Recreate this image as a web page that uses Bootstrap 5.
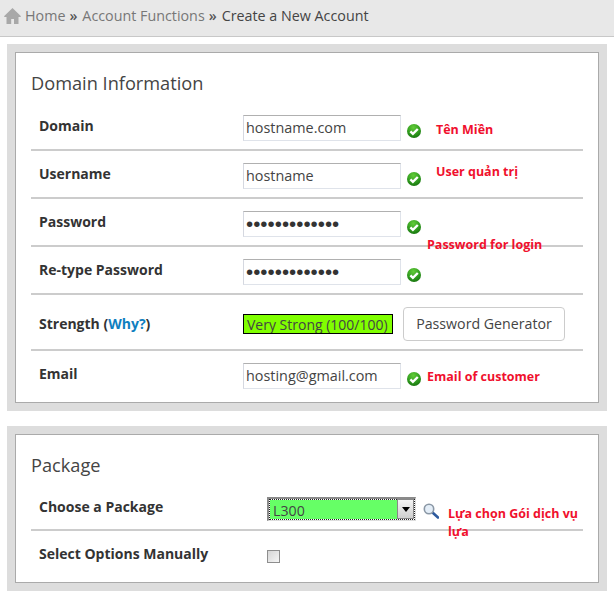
<!DOCTYPE html>
<html lang="vi">
<head>
<meta charset="utf-8">
<title>Create a New Account</title>
<link rel="stylesheet" href="https://cdn.jsdelivr.net/npm/bootstrap@5.3.0/dist/css/bootstrap.min.css">
<style>
body{background:#fff;font-family:"Open Sans",sans-serif;font-size:14px;color:#333;overflow:hidden}
.crumbbar{height:37px;background:#e8e8e8;border-bottom:1px solid #c8c8c8;padding:0 0 4px 4px;font-size:14.3px;color:#444}
.crumbbar a{color:#777;text-decoration:none}
.crumbhome{margin-right:4px;flex:none}
.crumbsep{margin:0 5px 0 4px;font-weight:600;color:#555}
.outerbox{margin:7px 7px 0 7px;border:8px solid #ddd;width:600px}
.outerbox + .outerbox{margin-top:15px}
.innerbox{border:1px solid #aaa;background:#fff;padding:0 15px}
.boxtitle{font-size:18.2px;font-weight:400;line-height:24px;color:#444;margin:0;padding:18px 0 20px}
.formrow{padding:12px 0 8px;border-bottom:2px solid #ccc;position:relative}
.formrow.firstrow{padding-top:0}
.formrow.lastrow{border-bottom:0;padding-bottom:13px}
.formrow.endrow{padding-bottom:17px}
.lbl{width:212px;padding-left:8px;font-weight:700;font-size:14px;color:#333;line-height:22px;flex:none}
.lbl.lblmid{padding-top:6px}
.lbl.lblup{margin-top:-1px}
.lbl a{color:#0f7fc0;text-decoration:none}
.txtin{width:158px;height:26px;border:1px solid #dfe3ea;border-top-color:#b0b0b0;border-left-color:#d5d8e0;padding:0 2px 2px;font-size:14.4px;font-family:"Open Sans",sans-serif;color:#444;background:#fff;outline:0}
.txtin[type=password]{font-family:"Liberation Sans",sans-serif;font-size:20.5px;padding:0 2px;color:#333}
.chk{margin:9px 0 0 6px;flex:none;display:block}
.note{color:#f0102d;font-weight:700;font-size:12.5px;line-height:18px;white-space:nowrap}
.noteover{position:absolute}
.noteemail{margin:5px 0 0 6px}
.notedomain{left:405px;top:6px}
.noteuser{left:405px;top:12px}
.notepass{left:396px;top:37px}
.notepkg{left:417px;top:8px;white-space:normal;width:142px}
.strengthbox{width:150px;height:20px;margin-top:7px;background:#80ff00;border:1px solid #000;font-size:14px;line-height:19px;color:#444;white-space:nowrap;overflow:hidden;padding-left:3px;flex:none}
.genbtn{margin-left:10px;width:162px;height:34px;padding:0;background:#fff;border:1px solid #ccc;border-radius:4px;font-size:14.2px;color:#444;font-family:"Open Sans",sans-serif}
.pkgwrap{margin-left:24px;width:149px;height:24px;border:2px solid #8a8a8a;border-right:1px solid #ddd;border-bottom:1px solid #ddd;position:relative;flex:none;background:#fff}
.pkgsel{appearance:none;-webkit-appearance:none;display:block;width:100%;height:100%;border:1px solid #fff;background:#66ff66;color:#444;font-size:14.2px;font-family:"Open Sans",sans-serif;padding:0 0 0 3px;outline:1px dotted #222;outline-offset:-1px;border-radius:0}
.pkgarrow{position:absolute;right:1px;top:0;width:17px;height:20px;border:1px solid #888;background:linear-gradient(#f4f4f4,#cfcfcf);display:flex;align-items:center;justify-content:center}
.mag{margin:6px 0 0 7px;display:block;flex:none}
.checkbtn{appearance:none;-webkit-appearance:none;display:block;width:13px;height:13px;margin:7px 0 0 24px;border:1px solid #8e8e8e;background:linear-gradient(135deg,#d6d6d6,#f6f6f6);border-radius:0}
</style>
</head>
<body>
<svg width="0" height="0" class="d-block position-absolute">
<defs>
<radialGradient id="gg" cx="45%" cy="25%" r="80%"><stop offset="0" stop-color="#62cc38"/><stop offset=".6" stop-color="#2f9a1e"/><stop offset="1" stop-color="#14700c"/></radialGradient>
<symbol id="okmark" viewBox="0 0 14 14"><circle cx="7" cy="7" r="7" fill="url(#gg)"/><path d="M3.4 7.4 5.9 9.8 10.8 5" fill="none" stroke="#fff" stroke-width="2.4"/></symbol>
</defs>
</svg>

<nav class="crumbbar d-flex align-items-center">
  <svg class="crumbhome" width="17" height="16" viewBox="0 0 17 16"><path d="M8.5 0 0 8.2 .6 9H2.5V16H7.2V11H10V16H14.5V9H16.4L17 8.2Z" fill="#a8a8a8"/></svg>
  <a href="#">Home</a><span class="crumbsep">»</span><a href="#">Account Functions</a><span class="crumbsep">»</span><span>Create a New Account</span>
</nav>

<section class="outerbox">
  <div class="innerbox">
    <h2 class="boxtitle">Domain Information</h2>
    <div class="formrow firstrow d-flex">
      <div class="lbl">Domain</div><input class="txtin" value="hostname.com"><svg class="chk" width="14" height="14"><use href="#okmark"/></svg>
      <span class="note noteover notedomain">Tên Miền</span>
    </div>
    <div class="formrow d-flex">
      <div class="lbl">Username</div><input class="txtin" value="hostname"><svg class="chk" width="14" height="14"><use href="#okmark"/></svg>
      <span class="note noteover noteuser">User quản trị</span>
    </div>
    <div class="formrow d-flex">
      <div class="lbl">Password</div><input class="txtin" type="password" value="hostname1234x"><svg class="chk" width="14" height="14"><use href="#okmark"/></svg>
      <span class="note noteover notepass">Password for login</span>
    </div>
    <div class="formrow d-flex">
      <div class="lbl">Re-type Password</div><input class="txtin" type="password" value="hostname1234x"><svg class="chk" width="14" height="14"><use href="#okmark"/></svg>
    </div>
    <div class="formrow d-flex">
      <div class="lbl lblmid">Strength (<a href="#">Why?</a>)</div>
      <div class="strengthbox">Very Strong (100/100)</div>
      <button type="button" class="btn genbtn">Password Generator</button>
    </div>
    <div class="formrow lastrow d-flex">
      <div class="lbl">Email</div><input class="txtin" value="hosting@gmail.com"><svg class="chk" width="14" height="14"><use href="#okmark"/></svg>
      <span class="note noteemail">Email of customer</span>
    </div>
  </div>
</section>

<section class="outerbox">
  <div class="innerbox">
    <h2 class="boxtitle">Package</h2>
    <div class="formrow firstrow d-flex">
      <div class="lbl lblup">Choose a Package</div>
      <div class="pkgwrap">
        <select class="pkgsel"><option>L300</option></select>
        <span class="pkgarrow"><svg width="8" height="5" viewBox="0 0 8 5"><path d="M0 0H8L4 5Z" fill="#000"/></svg></span>
      </div>
      <svg class="mag" width="16" height="16" viewBox="0 0 16 16"><path d="M9.5 9.5 15 14.5" stroke="#2d5a9e" stroke-width="2.6" stroke-linecap="round"/><circle cx="6" cy="6" r="4.7" fill="#e4eef8" stroke="#8a97a5" stroke-width="1.6"/></svg>
      <span class="note noteover notepkg">Lựa chọn Gói dịch vụ lựa</span>
    </div>
    <div class="formrow lastrow endrow d-flex">
      <div class="lbl">Select Options Manually</div>
      <input type="checkbox" class="checkbtn">
    </div>
  </div>
</section>
</body>
</html>
